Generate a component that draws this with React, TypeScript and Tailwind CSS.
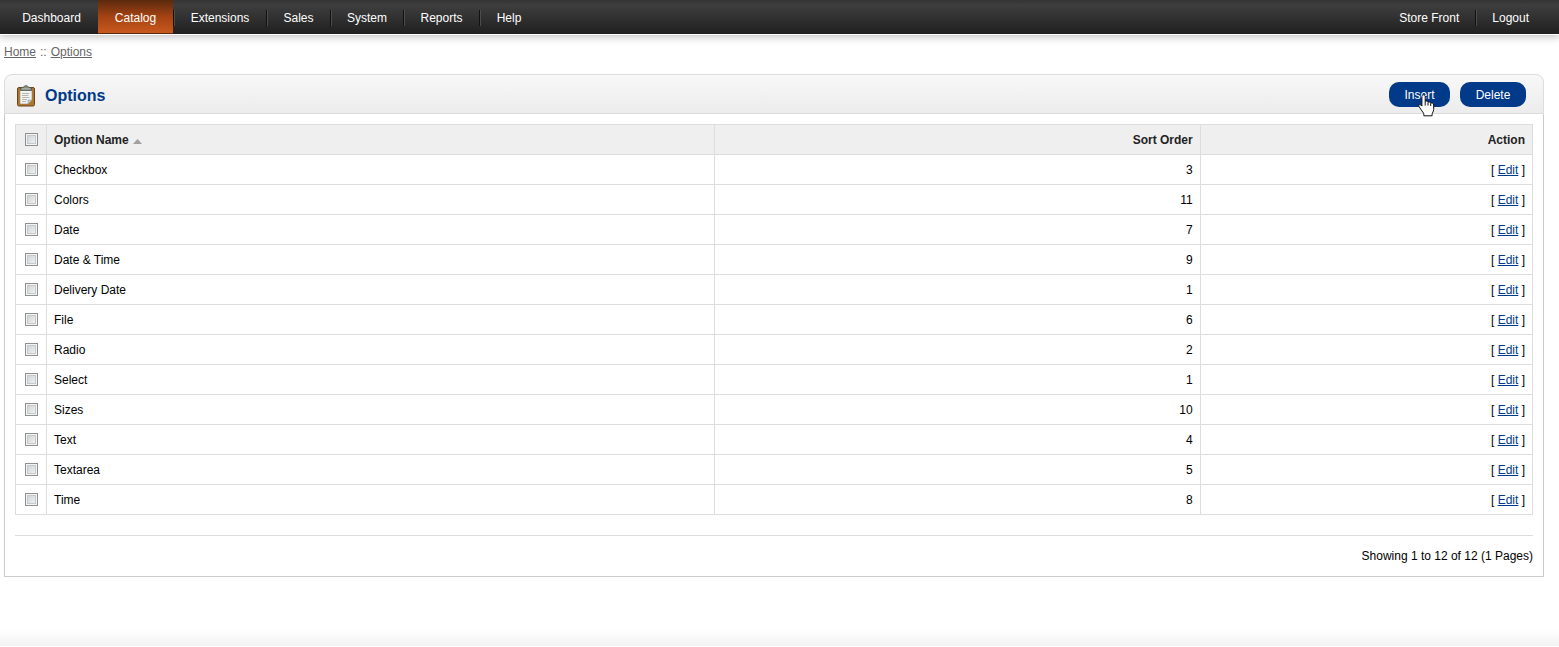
import React from "react";

type Option = { name: string; sort: number };

const options: Option[] = [
  { name: "Checkbox", sort: 3 },
  { name: "Colors", sort: 11 },
  { name: "Date", sort: 7 },
  { name: "Date & Time", sort: 9 },
  { name: "Delivery Date", sort: 1 },
  { name: "File", sort: 6 },
  { name: "Radio", sort: 2 },
  { name: "Select", sort: 1 },
  { name: "Sizes", sort: 10 },
  { name: "Text", sort: 4 },
  { name: "Textarea", sort: 5 },
  { name: "Time", sort: 8 },
];

const menu = [
  { label: "Dashboard", width: "w-[93px]" },
  { label: "Catalog", width: "w-[75px]", active: true },
  { label: "Extensions", width: "w-[92px]" },
  { label: "Sales", width: "w-[63px]" },
  { label: "System", width: "w-[72px]" },
  { label: "Reports", width: "w-[75px]" },
  { label: "Help", width: "w-[58px]" },
];

function Divider() {
  return <span className="mt-0.5 h-4 w-px bg-[#111111] shadow-[1px_0_0_#4c4c4c]" aria-hidden="true" />;
}

function MainNav() {
  return (
    <header className="relative z-10 flex h-[34px] justify-between bg-linear-to-b from-[#343434] via-[#3e3e3e] via-15% to-[#202020] pr-3.5 pl-[5px] shadow-[0_1px_0_#fff,0_2px_8px_1px_rgba(0,0,0,0.25)]">
      <nav className="flex items-center">
        {menu.map((item, i) => (
          <React.Fragment key={item.label}>
            {i > 1 && <Divider />}
            <a
              href="#"
              className={`flex h-full items-center justify-center pt-0.5 text-white ${item.width} ${
                item.active
                  ? "border-b border-[#5a2c14] bg-linear-to-b from-[#5c2a0e] via-[#a44312] via-50% to-[#c8581e]"
                  : ""
              }`}
            >
              {item.label}
            </a>
          </React.Fragment>
        ))}
      </nav>
      <nav className="flex items-center">
        <a href="#" className="px-4 pt-0.5 text-white">Store Front</a>
        <Divider />
        <a href="#" className="px-4 pt-0.5 text-white">Logout</a>
      </nav>
    </header>
  );
}

function ClipboardIcon() {
  return (
    <svg width="22" height="22" viewBox="0 0 22 22" aria-hidden="true">
      <rect x="2.5" y="2.5" width="17" height="18.5" rx="1.5" fill="#b0772c" stroke="#6b4413" />
      <path d="M5 4.5h12v10.500l-4 4H5z" fill="#f4f4f2" stroke="#8a8578" strokeWidth=".6" />
      <path d="M17 15l-4 4v-4z" fill="#c9cbc8" stroke="#969894" strokeWidth=".6" />
      <path d="M7 8.500h7.500M7 10.500h6.500M7 12.500h7.500M7 14.500h5M7 16.500h4" stroke="#b3b6b4" />
      <path d="M5.500 5.500V3l3-.8Q9.300.6 11 .6t2.500 1.600l3 .8v2.500z" fill="#888d85" stroke="#50564f" strokeWidth=".8" />
      <path d="M7 3.800h8" stroke="#b4b8b0" />
    </svg>
  );
}

function HandCursor() {
  return (
    <svg className="pointer-events-none absolute top-3 left-[29px]" width="17" height="23" viewBox="0 0 17 23" aria-hidden="true">
      <path
        d="M5.500.8C6.600.8 7.200 1.600 7.200 2.500v5c.6-.8 2.500-.5 2.800.8.7-.7 2.500-.4 2.700 1 .9-.6 3-.1 3 1.700v4.500c0 2.200-1.600 3-1.600 4.800v1.500H5.800v-1.500c0-1.500-1.800-3-2.600-4.500L.9 12.300c-.7-1.400.9-2.400 2-1.300l1 1.100V2.500c0-.9.6-1.700 1.600-1.700z"
        fill="#fff"
        stroke="#111"
      />
      <path d="M7.200 7.500v4M10 8.500v3M12.700 9.500v2.500" stroke="#111" fill="none" />
    </svg>
  );
}

function Tick({ label }: { label: string }) {
  return (
    <input
      type="checkbox"
      aria-label={label}
      className="mx-auto block size-[13px] appearance-none border border-[#8e8f8f] bg-linear-to-br from-[#c8cbce] to-[#f8f8f8] shadow-[inset_0_0_0_1px_#f4f4f4,inset_0_0_0_2px_#c6c9cc] checked:bg-[#003a88]"
    />
  );
}

const cell = "h-[30px] border border-[#dddddd] px-[7px]";
const action = "h-[25px] rounded-[10px] bg-[#003a88] pt-px text-white";

export default function App() {
  return (
    <div className="flex min-h-[646px] flex-col bg-white font-['Liberation_Sans',Arial,sans-serif] text-xs text-black">
      <MainNav />
      <main className="grow pr-[15px] pl-1">
        <div className="flex h-10 items-center gap-1 pb-1 text-[#666666]">
          <a href="#" className="underline">Home</a>
          <span>::</span>
          <a href="#" className="underline">Options</a>
        </div>
        <section>
          <div className="flex h-10 items-center justify-between rounded-t-lg border border-[#dddddd] bg-linear-to-b from-[#f8f8f8] to-[#ececec] pr-[17px] pl-2.5">
            <h1 className="flex items-center gap-2 pt-1 text-base font-bold text-[#003a88]">
              <ClipboardIcon />
              Options
            </h1>
            <div className="flex gap-2.5">
              <button type="button" className={`relative w-[61px] ${action}`}>
                Insert
                <HandCursor />
              </button>
              <button type="button" className={`w-[66px] ${action}`}>
                Delete
              </button>
            </div>
          </div>
          <div className="border border-t-0 border-[#cccccc] p-2.5 pb-3">
            <table className="w-full table-fixed border-collapse">
              <colgroup>
                <col className="w-[31px]" />
                <col className="w-[44.05%]" />
                <col className="w-[32%]" />
                <col />
              </colgroup>
              <thead className="bg-[#efefef] text-[#222222]">
                <tr>
                  <th className="h-[30px] border border-[#dddddd]"><Tick label="Select all" /></th>
                  <th className={`${cell} text-left`}>
                    <span className="flex items-center gap-1">
                      Option Name
                      <svg className="mt-1" width="9" height="5" viewBox="0 0 9 5" aria-hidden="true">
                        <path d="M4.500 0L9 5H0z" fill="#a0a0a0" />
                      </svg>
                    </span>
                  </th>
                  <th className={`${cell} text-right`}>Sort Order</th>
                  <th className={`${cell} text-right`}>Action</th>
                </tr>
              </thead>
              <tbody>
                {options.map((o) => (
                  <tr key={o.name}>
                    <td className="h-[30px] border border-[#dddddd]"><Tick label={o.name} /></td>
                    <td className={cell}>{o.name}</td>
                    <td className={`${cell} text-right`}>{o.sort}</td>
                    <td className={`${cell} text-right`}>
                      [ <a href="#" className="text-[#003a88] underline">Edit</a> ]
                    </td>
                  </tr>
                ))}
              </tbody>
            </table>
            <div className="mt-5 border-t border-[#dddddd] pt-3 text-right">Showing 1 to 12 of 12 (1 Pages)</div>
          </div>
        </section>
      </main>
      <footer className="h-4 bg-linear-to-b from-white to-[#f2f2f2]" />
    </div>
  );
}
